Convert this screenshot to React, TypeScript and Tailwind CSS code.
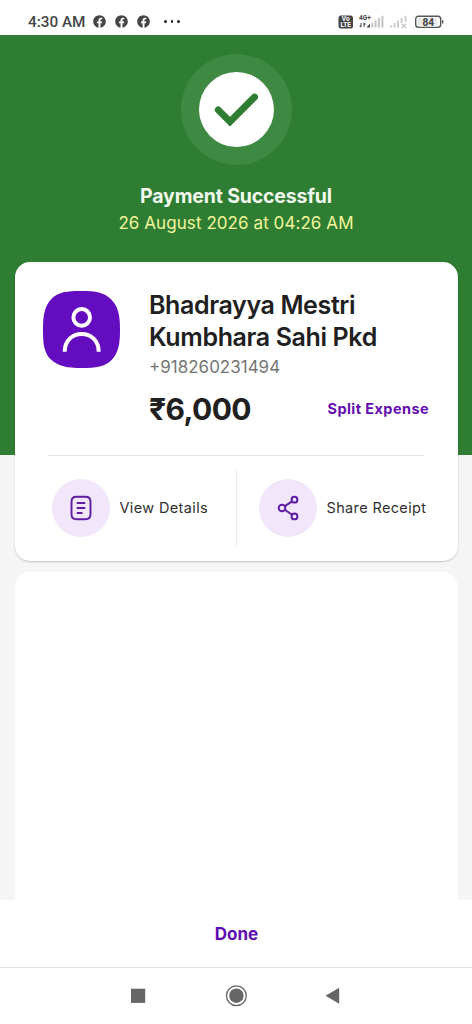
import { FaFacebook } from 'react-icons/fa';

function StatusBar() {
    return (
        <div className="flex h-[35px] shrink-0 items-center justify-between bg-white pt-[8px] pr-[28px] pl-[28px] text-[#454545]">
            <div className="flex items-center">
                <span className="w-[65px] font-['Roboto',sans-serif] text-[15.3px] leading-[18px] font-medium whitespace-nowrap">4:30 AM</span>
                <div className="flex gap-[9px]">
                    <FaFacebook size={13} />
                    <FaFacebook size={13} />
                    <FaFacebook size={13} />
                </div>
                <div className="ml-[14px] flex gap-[4px]">
                    <span className="size-[2.5px] rounded-full bg-[#222]" />
                    <span className="size-[2.5px] rounded-full bg-[#222]" />
                    <span className="size-[2.5px] rounded-full bg-[#222]" />
                </div>
            </div>
            <svg width="106" height="14" viewBox="0 0 106 14" className="font-['Roboto',sans-serif] font-bold">
                {/* VoLTE */}
                <rect x="0.5" y="0.5" width="14.5" height="13" rx="2.5" fill="#454545" />
                <text x="7.7" y="6.4" textAnchor="middle" fontSize="6.5" fill="#fff">Vo</text>
                <text x="7.7" y="12.4" textAnchor="middle" fontSize="6.5" fill="#fff">LTE</text>
                {/* first sim */}
                <text x="21" y="5.2" fontSize="6.5" fill="#454545">4G+</text>
                <path d="M23 8v4M21.6 10.6 23 12.2M26 12V8M26 8l1.4 1.5" stroke="#555" strokeWidth="1.1" fill="none" />
                <path d="M28.5 12.5h3.5v-4z" fill="#444" />
                <path d="M34.2 12.5V8M37.5 12.5V5.5M40.8 12.5V3M44.4 12.5V0.8" stroke="#c4c4c4" strokeWidth="2" />
                {/* second sim, no service */}
                <path d="M53 12.5v-2M56.5 12.5V8M60 12.5V5.5M63.5 8V3M67.6 6.5V0.8" stroke="#cdcdcd" strokeWidth="2" />
                <path d="m63.5 8.7 4.5 4.3m0-4.3L63.5 13" stroke="#c4c4c4" strokeWidth="1.2" />
                {/* battery */}
                <rect x="77.7" y="1.2" width="25" height="11.2" rx="2.8" fill="#fff" stroke="#555" strokeWidth="1.4" />
                <rect x="80" y="3" width="19" height="7.6" rx="1" fill="#e8e8e8" />
                <rect x="104" y="5" width="1.4" height="3.6" rx="0.7" fill="#555" />
                <text x="90.3" y="10.5" textAnchor="middle" fontSize="10.2" fill="#444">84</text>
            </svg>
        </div>
    );
}

function SuccessHeader() {
    return (
        <div className="flex flex-col items-center pt-[19px]">
            <div className="flex size-[111px] items-center justify-center rounded-full bg-[#3f8a42]">
                <div className="flex size-[75px] items-center justify-center rounded-full bg-white">
                    <svg width="75" height="75" viewBox="0 0 75 75" fill="none">
                        <path d="M19.2 37.8 31 49.7 55.6 25" stroke="#2e7d32" strokeWidth="6.8" strokeLinecap="round" />
                    </svg>
                </div>
            </div>
            <h1 className="mt-[18px] text-[19.5px] leading-[27px] font-bold tracking-[-0.17px] text-[#f3fbf0]">Payment Successful</h1>
            <p className="text-[17px] leading-[26px] tracking-[0.07px] text-[#f2f59b]">26 August 2026 at 04:26 AM</p>
        </div>
    );
}

function Avatar() {
    return (
        <svg width="77" height="77" viewBox="0 0 77 77" fill="none" className="shrink-0">
            <path d="M38.5 0C53 0 61 1.500 68 8.200S77 24 77 38.500 75.500 61.500 68.800 68.800 53 77 38.500 77 15.500 75.500 8.200 68.800 0 53 0 38.500 1.500 15.500 8.200 8.200 24 0 38.500 0Z" fill="#640dc0" />
            <circle cx="38.7" cy="26.4" r="8.3" stroke="#fff" strokeWidth="4" />
            <path d="M21.7 60.7C21.7 49.5 29.5 43 38.7 43s17 6.5 17 17.7" stroke="#fff" strokeWidth="4" />
        </svg>
    );
}

function DetailsIcon() {
    return (
        <svg width="24" height="26" viewBox="0 0 24 26" fill="none" stroke="#5f1da3" strokeWidth="1.9" strokeLinecap="round">
            <path d="M7.5 1.8H16.5Q21.5 1.800 21.5 6.800V19.200Q21.5 24.200 16.5 24.200H7.5Q2.5 24.200 2.5 19.200V6.800Q2.5 1.800 7.5 1.800Z" />
            <path d="M8.5 8H15.5M8.5 13H15.5M8.5 18H12.8" />
        </svg>
    );
}

function ShareIcon() {
    return (
        <svg width="24" height="26" viewBox="0 0 24 26" fill="none" stroke="#5f1da3" strokeWidth="2">
            <circle cx="6" cy="13" r="3.3" />
            <circle cx="18.5" cy="4.7" r="2.9" />
            <circle cx="18.5" cy="21.4" r="2.9" />
            <path d="M8.9 11.2 16 6.4M8.9 14.8 16 19.7" />
        </svg>
    );
}

function PaymentCard() {
    return (
        <div className="mr-[14px] ml-[15px] mt-[26px] h-[299px] shrink-0 rounded-[15px] bg-white shadow-[0_1px_2px_rgba(0,0,0,0.2)]">
            <div className="flex h-[193px] pt-[29px] pl-[28px]">
                <Avatar />
                <div className="ml-[29px] w-[280px]">
                    <h2 className="-mt-[1px] text-[25px] leading-[31.5px] font-semibold tracking-[-0.38px] text-[#202020]">
                        Bhadrayya Mestri
                        <br />
                        Kumbhara Sahi Pkd
                    </h2>
                    <p className="mt-[2px] text-[17px] leading-[24px] text-[#757575]">+918260231494</p>
                    <div className="mt-[10px] flex items-center justify-between">
                        <span className="text-[30px] leading-[40px] font-bold tracking-[-0.6px] text-[#202020]">₹6,000</span>
                        <button className="text-[14.5px] font-bold tracking-[0.42px] text-[#640dae]">Split Expense</button>
                    </div>
                </div>
            </div>
            <div className="mr-[34px] ml-[33px] h-px bg-[#e6e6e6]" />
            <div className="flex h-[104px] items-center text-[14.5px] tracking-[0.36px] text-[#303030]">
                <button className="flex w-[221px] items-center pl-[37px]">
                    <span className="mr-[9.5px] flex size-[58px] items-center justify-center rounded-full bg-[#f1e6fa]">
                        <DetailsIcon />
                    </span>
                    View Details
                </button>
                <div className="h-[76px] w-px bg-[#ececec]" />
                <button className="flex items-center pl-[22px]">
                    <span className="mr-[9.5px] flex size-[58px] items-center justify-center rounded-full bg-[#f1e6fa]">
                        <ShareIcon />
                    </span>
                    Share Receipt
                </button>
            </div>
        </div>
    );
}

function NavigationBar() {
    return (
        <div className="flex h-[57px] shrink-0 justify-center border-t border-[#e3e3e3] pt-[16px]">
            <svg width="212" height="24" viewBox="0 0 212 24" fill="#666">
                <rect x="1" y="4.7" width="14.2" height="14.2" />
                <circle cx="106.4" cy="11.7" r="7.2" />
                <circle cx="106.4" cy="11.7" r="9.9" fill="none" stroke="#666" strokeWidth="1.3" />
                <path d="M195.5 11.8 209.2 3.8v16z" />
            </svg>
        </div>
    );
}

export default function App() {
    return (
        <div className="flex h-[1024px] w-[472px] flex-col overflow-hidden bg-white font-['Inter',sans-serif]">
            <StatusBar />
            <main className="flex h-[865px] shrink-0 flex-col bg-[linear-gradient(#2e7d32_420px,#f5f5f5_420px)]">
                <SuccessHeader />
                <PaymentCard />
                <div className="mt-[11px] mr-[14px] ml-[15px] flex-1 rounded-t-[15px] bg-white" />
            </main>
            <button className="h-[67px] shrink-0 pt-[2px] pl-[1px] text-[17px] font-bold text-[#5f0db0]">Done</button>
            <NavigationBar />
        </div>
    );
}
